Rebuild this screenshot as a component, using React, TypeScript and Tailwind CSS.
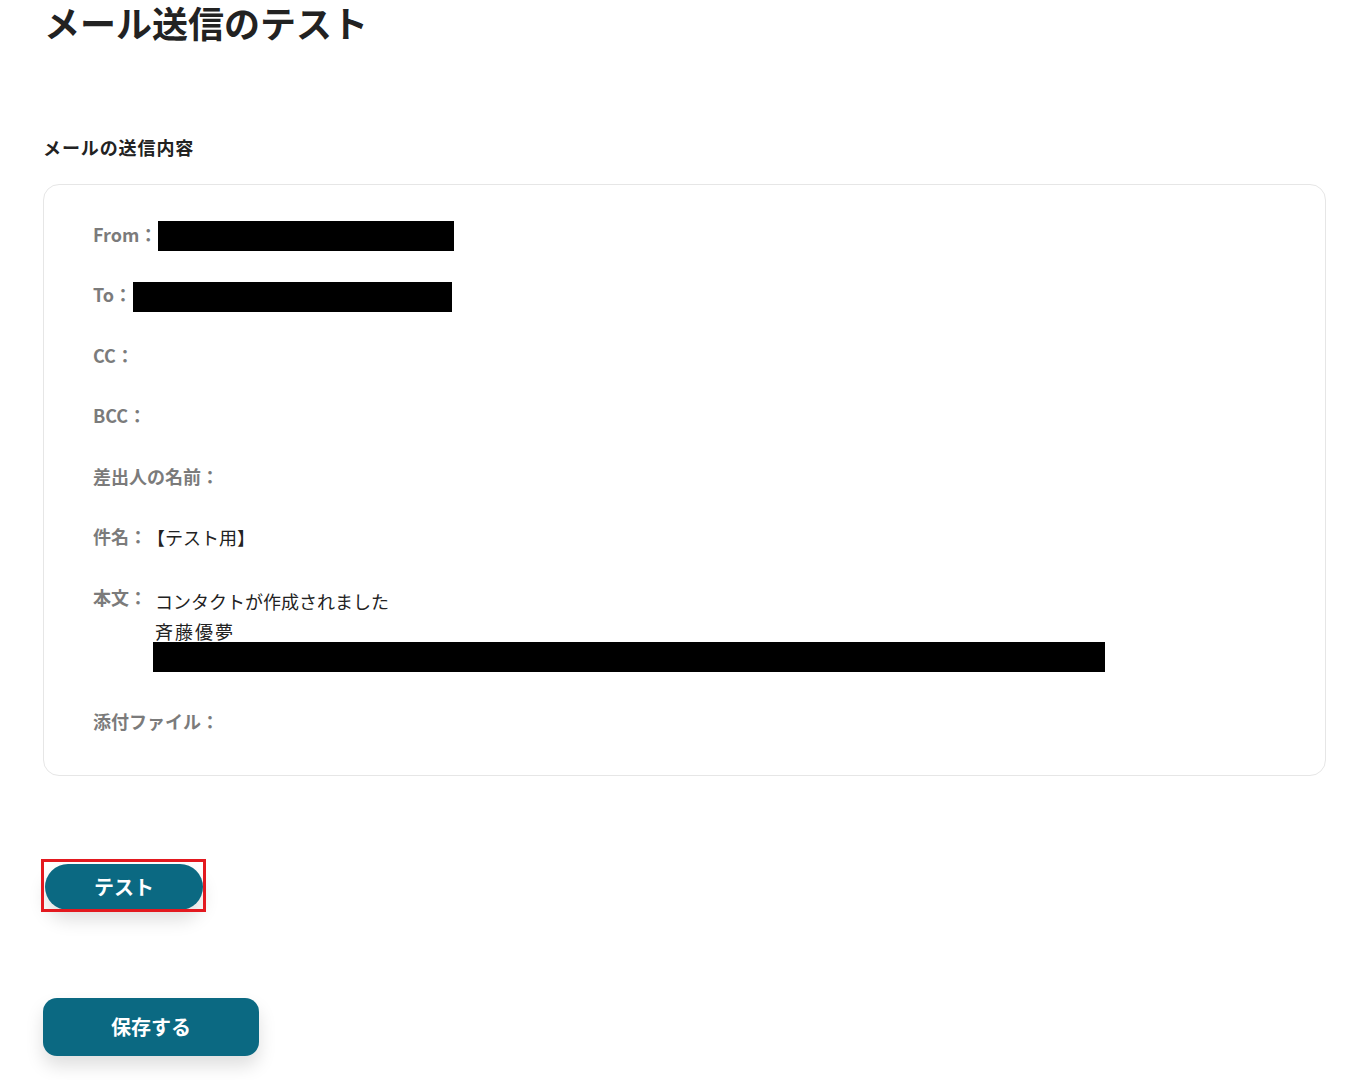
export default function App() {
  const rows: { label: string; box?: number; value?: string }[] = [
    { label: "From：", box: 296 },
    { label: "To：", box: 319 },
    { label: "CC：" },
    { label: "BCC：" },
    { label: "差出人の名前：" },
    { label: "件名：", value: "【テスト用】" },
  ]

  return (
    <main
      className="min-h-screen bg-white pl-[43px] pr-[39px] text-[#222]"
      style={{ fontFamily: '"Noto Sans CJK JP", "Noto Sans", sans-serif' }}
    >
      <h1 className="pt-[4px] text-[36px] font-bold leading-none ml-px">メール送信のテスト</h1>

      <h2 className="mt-[93px] text-[18px] font-bold leading-[28px] tracking-[0.9px]">メールの送信内容</h2>

      <section className="mt-[23px] rounded-2xl border border-[#e6e6e6] px-[49px] pt-9 pb-[37px]">
        <div className="flex flex-col gap-[30.5px]">
          {rows.map((r) => (
            <div key={r.label} className="flex h-[30px] items-center text-[18px]">
              <span className="pb-[4px] font-bold text-[#7b7b7b]">{r.label}</span>
              {r.box && <span className="ml-px h-[30px] bg-black" style={{ width: r.box }} />}
              {r.value && <span className="pb-[2px] text-[#222]">{r.value}</span>}
            </div>
          ))}

          <div className="mb-[5px] flex text-[18px]">
            <span className="h-[30px] font-bold leading-[26px] text-[#7b7b7b]">本文：</span>
            <div className="ml-[6px] flex flex-col pt-[2px] leading-[30px]">
              <span className="pl-[2px]">コンタクトが作成されました</span>
              <span className="pl-[2px] tracking-[2px]">斉藤優夢</span>
              <span className="-mt-1 h-[30px] w-[952px] bg-black" />
            </div>
          </div>

          <div className="flex h-[30px] items-center text-[18px]">
            <span className="pb-[3px] font-bold text-[#7b7b7b]">添付ファイル：</span>
          </div>
        </div>
      </section>

      <div className="relative mt-[88px] ml-[2px] inline-block">
        <button className="h-[46px] w-[158px] rounded-full bg-[#0b6982] text-[20px] font-bold text-white shadow-[0_10px_18px_rgba(0,0,0,0.13)]">
          テスト
        </button>
        <span className="pointer-events-none absolute -top-[5px] -left-[4px] h-[53px] w-[165px] border-[3px] border-[#e3191f]" />
      </div>

      <div className="mt-[88px]">
        <button className="h-[58px] w-[216px] rounded-[14px] bg-[#0b6982] text-[20px] font-bold text-white shadow-[0_10px_18px_rgba(0,0,0,0.13)]">
          保存する
        </button>
      </div>
    </main>
  )
}
